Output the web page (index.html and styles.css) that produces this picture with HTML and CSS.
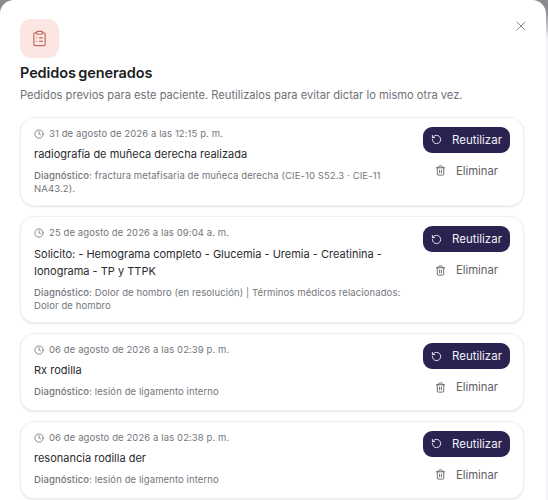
FILE: index.html
```html
<!DOCTYPE html>
<html lang="es">
<head>
<meta charset="utf-8">
<title>Pedidos generados</title>
<link rel="stylesheet" href="styles.css">
</head>
<body>
<svg class="sprite" width="0" height="0" aria-hidden="true">
  <symbol id="clock" viewBox="0 0 24 24"><circle cx="12" cy="12" r="10"/><path d="M12 6v6l4 2"/></symbol>
  <symbol id="undo" viewBox="0 0 24 24"><path d="M3 12a9 9 0 1 0 9-9 9.75 9.75 0 0 0-6.74 2.74L3 8"/><path d="M3 3v5h5"/></symbol>
  <symbol id="trash" viewBox="0 0 24 24"><path d="M3 6h18"/><path d="M19 6v14a2 2 0 0 1-2 2H7a2 2 0 0 1-2-2V6"/><path d="M8 6V4a2 2 0 0 1 2-2h4a2 2 0 0 1 2 2v2"/><path d="M10 11v6"/><path d="M14 11v6"/></symbol>
</svg>
<main class="modal">
  <button class="close" aria-label="Cerrar">
    <svg viewBox="0 0 24 24" class="close-icon"><path d="M18 6 6 18"/><path d="m6 6 12 12"/></svg>
  </button>
  <div class="badge">
    <svg viewBox="0 0 24 24" class="badge-icon"><rect x="8" y="2" width="8" height="4" rx="1"/><path d="M16 4h2a2 2 0 0 1 2 2v14a2 2 0 0 1-2 2H6a2 2 0 0 1-2-2V6a2 2 0 0 1 2-2h2"/><path d="M12 11h4"/><path d="M12 16h4"/><path d="M8 11h.01"/><path d="M8 16h.01"/></svg>
  </div>
  <h1 class="title">Pedidos generados</h1>
  <p class="subtitle">Pedidos previos para este paciente. Reutilizalos para evitar dictar lo mismo otra vez.</p>
  <section class="list">
    <article class="card">
      <div class="info">
        <div class="date"><svg class="date-icon"><use href="#clock"/></svg>31 de agosto de 2026 a las 12:15 p. m.</div>
        <div class="order">radiografía de muñeca derecha realizada</div>
        <div class="diag"><span class="label">Diagnóstico:</span> fractura metafisaria de muñeca derecha (CIE-10 S52.3 · CIE-11 NA43.2).</div>
      </div>
      <div class="actions">
        <button class="reuse"><svg class="btn-icon"><use href="#undo"/></svg>Reutilizar</button>
        <button class="remove"><svg class="btn-icon"><use href="#trash"/></svg>Eliminar</button>
      </div>
    </article>
    <article class="card">
      <div class="info">
        <div class="date"><svg class="date-icon"><use href="#clock"/></svg>25 de agosto de 2026 a las 09:04 a. m.</div>
        <div class="order">Solicito: - Hemograma completo - Glucemia - Uremia - Creatinina - Ionograma - TP y TTPK</div>
        <div class="diag"><span class="label">Diagnóstico:</span> Dolor de hombro (en resolución) | Términos médicos relacionados: Dolor de hombro</div>
      </div>
      <div class="actions">
        <button class="reuse"><svg class="btn-icon"><use href="#undo"/></svg>Reutilizar</button>
        <button class="remove"><svg class="btn-icon"><use href="#trash"/></svg>Eliminar</button>
      </div>
    </article>
    <article class="card">
      <div class="info">
        <div class="date"><svg class="date-icon"><use href="#clock"/></svg>06 de agosto de 2026 a las 02:39 p. m.</div>
        <div class="order">Rx rodilla</div>
        <div class="diag"><span class="label">Diagnóstico:</span> lesión de ligamento interno</div>
      </div>
      <div class="actions">
        <button class="reuse"><svg class="btn-icon"><use href="#undo"/></svg>Reutilizar</button>
        <button class="remove"><svg class="btn-icon"><use href="#trash"/></svg>Eliminar</button>
      </div>
    </article>
    <article class="card">
      <div class="info">
        <div class="date"><svg class="date-icon"><use href="#clock"/></svg>06 de agosto de 2026 a las 02:38 p. m.</div>
        <div class="order">resonancia rodilla der</div>
        <div class="diag"><span class="label">Diagnóstico:</span> lesión de ligamento interno</div>
      </div>
      <div class="actions">
        <button class="reuse"><svg class="btn-icon"><use href="#undo"/></svg>Reutilizar</button>
        <button class="remove"><svg class="btn-icon"><use href="#trash"/></svg>Eliminar</button>
      </div>
    </article>
  </section>
</main>
</body>
</html>
```
FILE: styles.css
```css
* { box-sizing: border-box; }
html, body { margin: 0; height: 500px; overflow: hidden; }
body { background: linear-gradient(#8a8b8e 0, #8a8b8e 10px, #f6f6fa 40px); font-family: Inter, "Liberation Sans", sans-serif; color: #27272a; }
.sprite { position: absolute; }
.modal {
  position: relative;
  width: 546px;
  height: 500px;
  padding: 19px 22px 0 20px;
  background: #fff;
  border-radius: 14px 14px 0 0;
  overflow: hidden;
}
.close {
  position: absolute;
  top: 18px;
  right: 17px;
  width: 16px;
  height: 16px;
  padding: 0;
  border: 0;
  background: none;
}
.close-icon { display: block; width: 16px; height: 16px; fill: none; stroke: #8a8c92; stroke-width: 1.5; stroke-linecap: round; }
.badge {
  width: 39px;
  height: 39px;
  border-radius: 11px;
  background: #fbe6e3;
  display: flex;
  align-items: center;
  justify-content: center;
}
.badge-icon { width: 17px; height: 17px; fill: none; stroke: #c4695d; stroke-width: 1.7; stroke-linecap: round; stroke-linejoin: round; }
.title { margin: 7px 0 0; font-size: 14.5px; line-height: 16px; font-weight: 600; letter-spacing: -0.1px; word-spacing: -1px; color: #1c1c22; }
.subtitle { margin: 6px 0 0; font-size: 11.15px; line-height: 16px; color: #6f7177; white-space: nowrap; }
.list { margin-top: 13.5px; display: flex; flex-direction: column; gap: 9.8px; }
.card {
  display: flex;
  justify-content: space-between;
  gap: 12px;
  padding: 10px 13px 10px 13px;
  border: 1px solid #eeeff1;
  border-radius: 14px;
  background: #fff;
  box-shadow: 0 1px 2px rgba(20, 20, 40, 0.1);
}
.info { flex: 1; min-width: 0; }
.date { display: flex; align-items: center; gap: 5px; font-size: 9.5px; line-height: 12px; color: #74767c; letter-spacing: 0.1px; }
.date-icon { width: 10px; height: 10px; fill: none; stroke: #74767c; stroke-width: 2; stroke-linecap: round; stroke-linejoin: round; }
.order { margin-top: 6.4px; font-size: 11px; line-height: 17px; color: #2a2a30; }
.diag { margin-top: 6px; font-size: 9.5px; line-height: 13.3px; color: #74767c; letter-spacing: 0.1px; }
.label { font-weight: 500; }
.actions { flex: none; width: 87px; margin-top: -1px; display: flex; flex-direction: column; align-items: center; gap: 5px; }
.reuse, .remove {
  display: flex;
  align-items: center;
  font-family: inherit;
  border: 0;
  padding: 0;
  white-space: nowrap;
}
.reuse { width: 87px; height: 26px; gap: 10px; padding-left: 8px; border-radius: 9px; background: #2a2350; color: #f2f1f7; font-size: 11.5px; font-weight: 400; }
.remove { height: 26px; gap: 10px; background: none; color: #5f6167; font-size: 11.3px; font-weight: 400; }
.btn-icon { width: 11px; height: 11px; fill: none; stroke: currentColor; stroke-width: 2; stroke-linecap: round; stroke-linejoin: round; }
```
